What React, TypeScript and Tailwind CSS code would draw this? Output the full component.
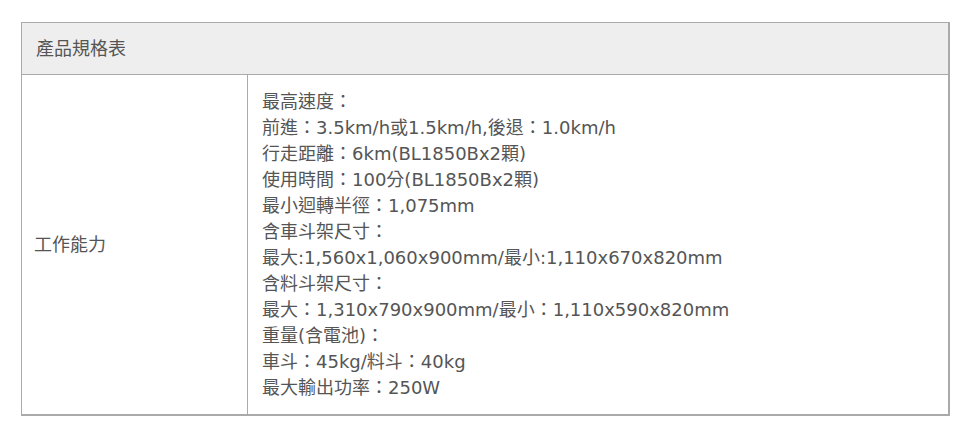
const lines = [
  "最高速度：",
  "前進：3.5km/h或1.5km/h,後退：1.0km/h",
  "行走距離：6km(BL1850Bx2顆)",
  "使用時間：100分(BL1850Bx2顆)",
  "最小迴轉半徑：1,075mm",
  "含車斗架尺寸：",
  "最大:1,560x1,060x900mm/最小:1,110x670x820mm",
  "含料斗架尺寸：",
  "最大：1,310x790x900mm/最小：1,110x590x820mm",
  "重量(含電池)：",
  "車斗：45kg/料斗：40kg",
  "最大輸出功率：250W",
];

export default function App() {
  return (
    <div
      className="min-h-[431px] bg-white pl-[21px] pr-[11px] pt-[22px] text-[18px] text-[#555]"
      style={{ fontFamily: '"DejaVu Sans", "Noto Sans CJK TC", sans-serif' }}
    >
      <div className="border-t border-l border-r-2 border-b-2 border-[#aaa]">
        <div className="flex h-[52px] items-center border-b border-[#aaa] bg-[#eeeeee] px-[14px]">
          產品規格表
        </div>
        <div className="grid grid-cols-[226px_1fr]">
          <div className="flex items-center border-r border-[#aaa] px-[12px]">工作能力</div>
          <div className="px-[14px] pt-[14px] pb-[13px] leading-[26px]">
            {lines.map((l) => (
              <div key={l}>{l}</div>
            ))}
          </div>
        </div>
      </div>
    </div>
  );
}
